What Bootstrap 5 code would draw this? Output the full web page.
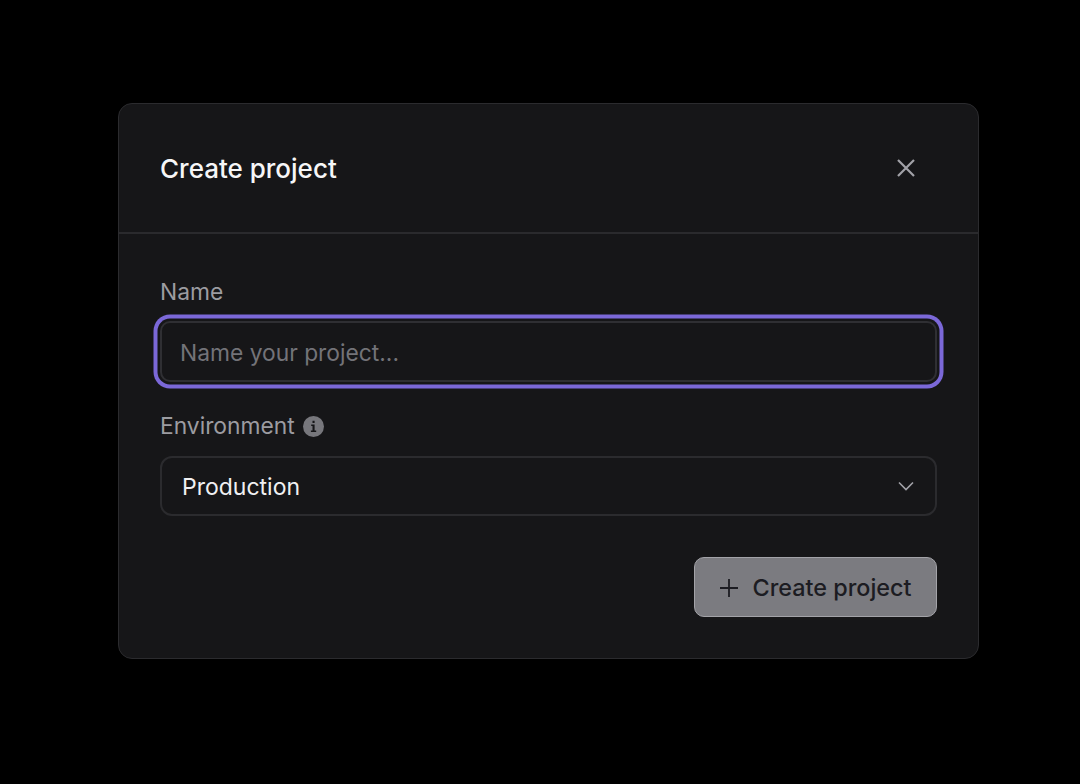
<!DOCTYPE html>
<html lang="en">
<head>
<meta charset="utf-8">
<title>Create project</title>
<link href="https://cdn.jsdelivr.net/npm/bootstrap@5.3.0/dist/css/bootstrap.min.css" rel="stylesheet">
<style>
html, body { height: 100%; }
body { background: #000; font-family: Inter, "Liberation Sans", sans-serif; padding: 103px 101px 0 118px; overflow: hidden; }
.dlg { background: #161618; border: 1px solid #2b2b2e; border-radius: 14px; height: 556px; }
.dlg-head { height: 130px; padding: 2px 41px 0; border-bottom: 2px solid #2a2a2d; }
.dlg-title { color: #f6f6f7; font-size: 26px; font-weight: 450; margin: 0; line-height: 1; }
.dlg-close { background: none; border: 0; padding: 0; width: 20px; height: 20px; margin: -2px 21px 0 0; color: #a2a2a8; line-height: 0; }
.dlg-body { padding: 44px 41px 0; }
.fld-label { color: #9c9ca1; font-size: 22.8px; line-height: 28px; margin: 0 0 15px; }
.fld-input.form-control { background: #161618; border: 2px solid #2f2f33; border-radius: 10px; height: 61px; color: #fff; font-size: 22.8px; padding: 2px 18px 0; box-shadow: 0 0 0 2.5px #161618, 0 0 0 6.5px #7b68d8; margin-bottom: 30px; }
.fld-input.form-control::placeholder { color: #737378; opacity: 1; }
.sel-wrap { height: 60px; }
.fld-select.form-select { background-color: #161618; background-image: none; border: 2px solid #2b2b2e; border-radius: 12px; height: 60px; color: #f0f0f2; font-size: 23px; padding: 2px 20px 0; box-shadow: none; }
.sel-chev { position: absolute; right: 23px; top: 25px; color: #a2a2a8; line-height: 0; pointer-events: none; }
.info-ic { line-height: 0; }
.go-btn.btn { background: #7b7b80; border: 1px solid #a3a3a8; border-radius: 10px; color: #1d1d21; font-size: 23.4px; font-weight: 500; height: 60px; width: 243px; padding: 1px 0 0; opacity: 1; margin-top: 41px; gap: 15px; }
.go-btn.btn:disabled { background: #7b7b80; border-color: #a3a3a8; color: #1c1c22; opacity: 1; }
.env-label { margin-bottom: 16px; }
</style>
</head>
<body>
<div class="dlg">
  <div class="dlg-head d-flex align-items-center justify-content-between">
    <h1 class="dlg-title">Create project</h1>
    <button class="dlg-close" type="button" aria-label="Close">
      <svg width="20" height="20" viewBox="0 0 20 20" fill="none" stroke="currentColor" stroke-width="2.2"><path d="M2 2 18 18M18 2 2 18"/></svg>
    </button>
  </div>
  <div class="dlg-body">
    <label class="fld-label d-block" for="pname">Name</label>
    <input id="pname" class="form-control fld-input" type="text" placeholder="Name your project...">
    <div class="fld-label env-label d-flex align-items-center gap-2">
      <span>Environment</span>
      <span class="info-ic"><svg width="21" height="21" viewBox="0 0 21 21"><circle cx="10.5" cy="10.5" r="10.5" fill="#77777c"/><path d="M8.2 8.6h3.4v6h1.6v1.3H7.9v-1.3h1.6V9.9H8.2zM9.5 4.8h2.1v2.1H9.5z" fill="#161618"/></svg></span>
    </div>
    <div class="position-relative sel-wrap">
      <select class="form-select fld-select"><option>Production</option></select>
      <span class="sel-chev"><svg width="16" height="10" viewBox="0 0 16 10" fill="none" stroke="currentColor" stroke-width="1.6"><path d="M1 1.5 8 8.5 15 1.5"/></svg></span>
    </div>
    <div class="d-flex justify-content-end">
      <button class="btn go-btn d-flex align-items-center justify-content-center" type="button" disabled>
        <svg width="18" height="18" viewBox="0 0 18 18" fill="none" stroke="currentColor" stroke-width="1.8"><path d="M9 0V18M0 9H18"/></svg>
        <span>Create project</span>
      </button>
    </div>
  </div>
</div>
</body>
</html>
